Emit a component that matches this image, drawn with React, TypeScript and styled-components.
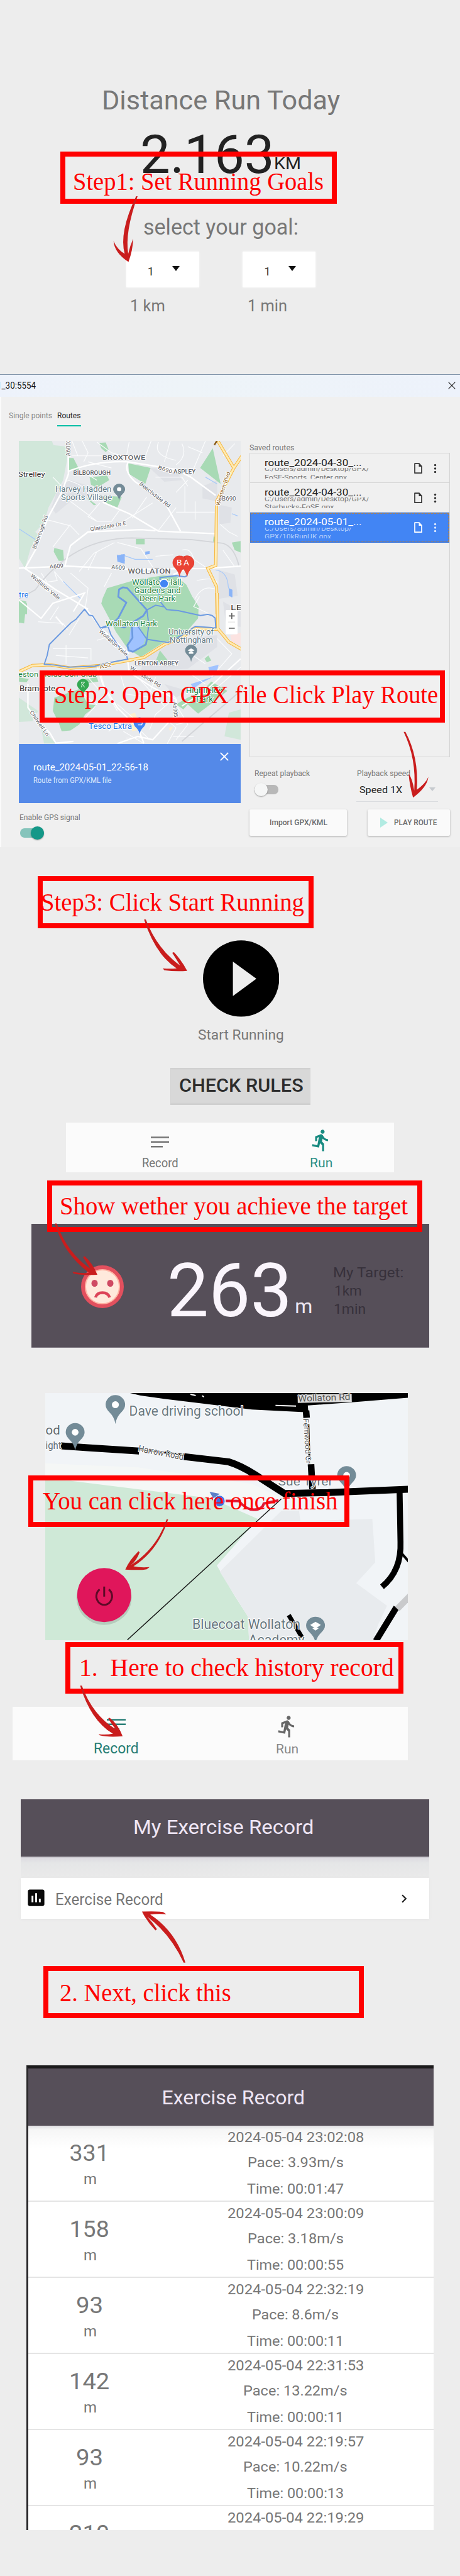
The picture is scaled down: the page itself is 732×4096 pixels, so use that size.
import React, { useLayoutEffect, useRef, useState } from "react";
import styled, { createGlobalStyle, css } from "styled-components";
import { MdDirectionsRun, MdInsertChart, MdChevronRight } from "react-icons/md";

const Global = createGlobalStyle`
  * { box-sizing: border-box; }
  html, body { margin: 0; padding: 0; background: #ededed; }
  body { font-family: Roboto, "Liberation Sans", sans-serif; }
`;

const Page = styled.main`
  position: relative;
  width: 732px;
  height: 4096px;
  overflow: hidden;
  background: #ededed;
`;

/* ---------- text ---------- */

const TextBox = styled.div<{ $w: number; $size: number; $top?: number; $left?: number; $color?: string; $weight?: number; $serif?: boolean; $self?: string }>`
  flex: none;
  width: ${(p) => p.$w}px;
  height: ${(p) => p.$size}px;
  line-height: ${(p) => p.$size}px;
  font-size: ${(p) => p.$size}px;
  font-weight: ${(p) => p.$weight ?? 400};
  color: ${(p) => p.$color ?? "#777"};
  margin: ${(p) => p.$top ?? 0}px 0 0 ${(p) => p.$left ?? 0}px;
  align-self: ${(p) => p.$self ?? "flex-start"};
  white-space: pre;
  ${(p) => p.$serif && css`font-family: "Liberation Serif", "Times New Roman", serif;`}
`;

const Stretch = styled.span`
  display: inline-block;
  transform-origin: 0 50%;
`;

type TextProps = { w: number; size: number; top?: number; left?: number; color?: string; weight?: number; serif?: boolean; self?: string; children: string };

/* A single line stretched horizontally to an exact width. */
function Text({ w, size, top, left, color, weight, serif, self, children }: TextProps) {
  const ref = useRef<HTMLSpanElement>(null);
  const [k, setK] = useState(1);
  useLayoutEffect(() => {
    if (ref.current) setK(w / ref.current.offsetWidth);
  }, [w, children]);
  return (
    <TextBox $w={w} $size={size} $top={top} $left={left} $color={color} $weight={weight} $serif={serif} $self={self}>
      <Stretch ref={ref} style={{ transform: `scaleX(${k})` }}>{children}</Stretch>
    </TextBox>
  );
}

/* ---------- step 1: goals ---------- */

const Goals = styled.section`
  height: 595.2px;
  padding-top: 138.8px;
  display: flex;
  flex-direction: column;
`;
const Row = styled.div<{ $top?: number; $left?: number; $gap?: number }>`
  display: flex;
  align-items: flex-start;
  margin: ${(p) => p.$top ?? 0}px 0 0 ${(p) => p.$left ?? 0}px;
  gap: ${(p) => p.$gap ?? 0}px;
`;
const Select = styled.div`
  display: flex;
  width: 116px;
  height: 57.6px;
  padding: 23px 0 0 34px;
  gap: 29px;
  background: #fff;
  box-shadow: 0 0 3px #f6f6f6;
`;
const Caret = styled.i<{ $w?: number; $h?: number; $color?: string }>`
  width: 0;
  height: 0;
  border-left: ${(p) => p.$w ?? 6.6}px solid transparent;
  border-right: ${(p) => p.$w ?? 6.6}px solid transparent;
  border-top: ${(p) => p.$h ?? 8}px solid ${(p) => p.$color ?? "#111"};
`;

/* ---------- step 2: emulator window ---------- */

const Window = styled.section`
  height: 752px;
  background: #f0f0f0;
  border-left: 2px solid #fbfbfb;
  display: flex;
  flex-direction: column;
`;
const TitleBar = styled.header`
  display: flex;
  justify-content: space-between;
  height: 35.5px;
  margin-left: -2px;
  padding: 11px 7px 0 0;
  border-top: 1.4px solid #8295aa;
  background: linear-gradient(90deg, #edf2fb, #eef4f8 40%, #edf2fb);
  overflow: hidden;
`;
const Tabs = styled.nav`
  display: flex;
  gap: 8px;
  height: 70.7px;
  padding: 24.6px 0 0 12px;
`;
const ActiveTab = styled.div`
  width: 37.8px;
  height: 22.5px;
  border-bottom: 2px solid #00bfa5;
`;
const Columns = styled.div`
  display: flex;
  gap: 14.5px;
  padding-left: 27.9px;
`;
const LeftCol = styled.div`
  width: 352.9px;
  display: flex;
  flex-direction: column;
`;
const RightCol = styled.div`
  width: 319px;
  display: flex;
  flex-direction: column;
`;
const RouteCard = styled.div`
  display: flex;
  height: 94.1px;
  padding-left: 22.9px;
  background: #5489e8;
`;
const RouteInfo = styled.div`
  width: 297px;
`;
const CloseSlot = styled.div`
  margin-top: 12.4px;
`;
const List = styled.div`
  margin-top: 2.5px;
  height: 484px;
  border: 1px solid #d4d4d4;
  border-top-width: 1.6px;
  border-bottom-width: 1.6px;
`;
const Item = styled.div<{ $on?: boolean }>`
  display: flex;
  height: 47.2px;
  padding-left: 22.3px;
  background: ${(p) => (p.$on ? "#4285f4" : "transparent")};
  border-bottom: 1px solid ${(p) => (p.$on ? "#3d79dd" : "#d4d4d4")};
  ${(p) => p.$on && css`box-shadow: inset 0 0 0 1.5px #3d79dd; outline: 1px dashed #a98258; outline-offset: -2.5px;`}
`;
const ItemText = styled.div`
  width: 238px;
`;
const PathClip = styled.div`
  height: 17px;
  margin-top: 0.8px;
  overflow: hidden;
  display: flex;
  flex-direction: column;
  & > :first-child { margin-top: -3.8px; }
`;
const IconPair = styled.svg`
  margin-top: 13.5px;
`;
const Controls = styled.div`
  display: flex;
  justify-content: space-between;
  height: 83px;
  padding: 19.8px 19px 0 7.5px;
`;
const ToggleTrack = styled.div<{ $on?: boolean }>`
  display: flex;
  align-items: center;
  justify-content: ${(p) => (p.$on ? "flex-end" : "flex-start")};
  width: 38px;
  height: 15px;
  border-radius: 7px;
  background: ${(p) => (p.$on ? "#85c4bb" : "#b8b8b8")};
`;
const Knob = styled.span<{ $on?: boolean }>`
  width: 21px;
  height: 21px;
  flex: none;
  border-radius: 50%;
  background: ${(p) => (p.$on ? "#149888" : "#f5f6f6")};
  box-shadow: 0 1px 2px rgba(0, 0, 0, 0.35);
`;
const Speed = styled.div`
  width: 129.8px;
`;
const SpeedValue = styled.div`
  display: flex;
  justify-content: space-between;
  height: 29px;
  margin-top: 10px;
  padding: 0 4px 0 5px;
  border-bottom: 1.4px solid #dadcdf;
`;
const Buttons = styled.div`
  display: flex;
  justify-content: space-between;
`;
const Button = styled.div<{ $w: number }>`
  display: flex;
  align-items: center;
  justify-content: center;
  gap: 10px;
  width: ${(p) => p.$w}px;
  height: 42px;
  background: #fafafa;
  border-radius: 2px;
  box-shadow: 0 1px 3px rgba(0, 0, 0, 0.3);
`;
const PlayMark = styled.i`
  border-left: 12.6px solid #b2ebe2;
  border-top: 8px solid transparent;
  border-bottom: 8px solid transparent;
`;

/* ---------- phone screens ---------- */

const Start = styled.section`
  display: flex;
  flex-direction: column;
  height: 437.6px;
  padding-top: 147.9px;
`;
const PlayCircle = styled.svg`
  flex: none;
  margin-left: 322.6px;
`;
const RulesButton = styled.div`
  width: 223.6px;
  height: 59px;
  margin: 41.5px 0 0 270.8px;
  padding: 14.5px 0 0 14px;
  background: #d8d8d8;
  box-shadow: inset 0 -3px 2px #cfcfcf, inset 0 2px 2px #cfcfcf;
`;
const NavBar = styled.nav<{ $w: number; $h: number; $left: number; $top?: number }>`
  display: flex;
  width: ${(p) => p.$w}px;
  height: ${(p) => p.$h}px;
  margin: ${(p) => p.$top ?? 0}px 0 0 ${(p) => p.$left}px;
  background: #fbfbfb;
`;
const NavItem = styled.div<{ $left: number; $color: string }>`
  display: flex;
  flex-direction: column;
  align-items: center;
  width: 72px;
  margin-left: ${(p) => p.$left}px;
  color: ${(p) => p.$color};
`;
const IconSlot = styled.div<{ $top: number; $h: number }>`
  height: ${(p) => p.$h}px;
  margin-top: ${(p) => p.$top}px;
`;
const Distance = styled.section`
  display: flex;
  width: 633px;
  height: 197.7px;
  margin: 82.1px 0 0 50px;
  background: #564f59;
  border-bottom: 1px solid #77717a;
`;
const FaceIcon = styled.svg`
  flex: none;
  margin: 66.6px 0 0 79.3px;
`;
const Target = styled.div`
  padding: 67px 0 0 32.5px;
`;
const MapFrame = styled.section`
  width: 577px;
  height: 392.5px;
  margin: 71.8px 0 0 72.4px;
`;
const MapSvg = styled.svg`
  display: block;
  font-family: Roboto, sans-serif;
  path { vector-effect: non-scaling-stroke; }
`;
const ScreenHeader = styled.header<{ $h: number }>`
  display: flex;
  justify-content: center;
  height: ${(p) => p.$h}px;
  background: #564f59;
`;
const RecordMenu = styled.section`
  width: 650px;
  margin: 62.4px 0 0 33px;
`;
const Shade = styled.div`
  height: 33.5px;
  background: linear-gradient(#a5a2a9, #dcdae0 6%, #e5e6e7 30%, #eaeaea);
`;
const MenuRow = styled.div`
  display: flex;
  height: 65.7px;
  padding: 14px 0 0 7.4px;
  background: #fff;
  box-shadow: 0 1px 4px #e4e4e4;
`;
const History = styled.section`
  width: 648px;
  height: 738.8px;
  margin: 232.8px 0 0 42px;
  border-top: 5px solid #1b1a1b;
  border-left: 3px solid #2a292b;
  background: #fff;
  overflow: hidden;
`;
const Entry = styled.div<{ $first?: boolean }>`
  display: grid;
  grid-template-columns: 194px 451px;
  height: 121px;
  border-bottom: 2px solid #e5e5e5;
  ${(p) => p.$first && css`background: linear-gradient(#dedde1, #f6f6f6 5%, #fff 30%);`}
`;
const Cell = styled.div`
  display: flex;
  flex-direction: column;
`;

/* ---------- annotations floating over the screens ---------- */

const Callout = styled.div<{ $x: number; $y: number; $w: number; $pad: number; $padTop: number }>`
  position: absolute;
  left: ${(p) => p.$x}px;
  top: ${(p) => p.$y}px;
  width: ${(p) => p.$w}px;
  height: 82.6px;
  border: 8px solid #f00;
  padding-top: ${(p) => p.$padTop}px;
  & > div { margin-left: ${(p) => p.$pad}px; }
`;
const ArrowLayer = styled.svg`
  position: absolute;
  left: 0;
  top: 0;
  pointer-events: none;
`;

function Note({ x, y, w, tx, base, tw, children }: { x: number; y: number; w: number; tx: number; base: number; tw: number; children: string }) {
  return (
    <Callout $x={x} $y={y} $w={w} $pad={tx - x - 8} $padTop={base - 32.8 - y - 8}>
      <Text w={tw} size={39} left={tx - x - 8} color="#f00" serif>{children}</Text>
    </Callout>
  );
}

const arrows = [
  { y: 101.66, k: 0.3112, d: "M469 676L464 676Q405 860 425 970Q400 950 387 905Q390 965 438 1012Q453 950 454 893Q443 930 437 970Q425 860 469 676Z" },
  { y: 948.8, k: 0.26797, d: "M1376 802L1382 802Q1428 950 1421 1145Q1450 1110 1460 1070Q1456 1130 1408 1192Q1396 1120 1393 1050Q1406 1080 1412 1150Q1420 960 1376 802Z" },
  { y: 1382.5, k: 0.31552, d: "M491 252L497 252Q535 400 614 484Q600 450 587 420L593 417Q620 460 638 511Q600 516 560 508L555 498Q580 502 602 498Q530 430 491 252Z" },
  { y: 1857, k: 0.22591, d: "M187 392L193 392Q230 600 308 710L283 628L289 622Q315 670 332 752Q280 758 250 742L247 732Q280 745 303 738Q215 600 187 392Z" },
  { y: 2189, k: 0.32849, d: "M568 690L573 690Q540 840 455 918Q480 926 510 922L500 932Q480 938 427 934Q440 890 472 845L476 850Q466 890 446 912Q535 830 568 690Z" },
  { y: 2683.8, k: 0.32849, d: "M273 -11L279 -11Q315 130 394 200Q375 165 369 147L374 145Q402 175 418 234Q370 240 340 230L336 224Q360 228 385 222Q310 160 273 -11Z" },
  { y: 2683.8, k: 0.32849, d: "M626 1330L632 1330Q600 1180 512 1097Q540 1092 567 1096L556 1085Q530 1080 484 1083Q500 1130 530 1174L535 1168Q520 1135 502 1108Q580 1190 626 1330Z" },
];

/* ---------- drawings ---------- */

const X = 0.46684;

type LabProps = { x: number; y: number; w: number; s: number; c?: string; rot?: number; halo?: string; weight?: number; children: string };
const Lab = ({ x, y, w, s, c = "#5f6368", rot = 0, halo = "#fff", weight = 400, children }: LabProps) => (
  <text
    transform={`translate(${x} ${y}) rotate(${rot})`}
    fontSize={s}
    fontWeight={weight}
    fill={c}
    stroke={halo}
    strokeWidth={halo === "none" ? 0 : 2}
    paintOrder="stroke"
    strokeLinejoin="round"
    textLength={w}
    lengthAdjust="spacingAndGlyphs"
  >
    {children}
  </text>
);

const Pin = ({ x, y, w, h, c = "#738b97", hole = "#fff" }: { x: number; y: number; w: number; h: number; c?: string; hole?: string }) => (
  <g transform={`translate(${x} ${y}) scale(${w / 20} ${h / 30})`}>
    <path d="M0 30Q-1 23 -6 18Q-10 14 -10 10A10 10 0 0 1 10 10Q10 14 6 18Q1 23 0 30Z" fill={c} />
    {hole !== "none" && <circle cy="10" r="3.6" fill={hole} />}
  </g>
);

const westernBlvd = "M740 455L797 640L738 860L735 1280L708 1300L738 1420L740 1600M825 560L797 640";
const a52 = "M60 450L110 410L170 405L240 425L340 410L435 380L490 362L560 285L620 245L660 190L740 195M740 -20L742 190L780 270L825 315";

const RouteMap = () => (
  <MapSvg width="352.9" height="481.3" viewBox="29.9 701.4 352.9 481.3" preserveAspectRatio="none">
    <rect x="29" y="701" width="355" height="483" fill="#e8eaed" />
    <g transform={`translate(0 589.6) scale(${X} .24204)`} fill="none">
      <path fill="#d1e7da" d="M60 455H175L182 490L230 500L228 590L215 720L165 900L150 1000L120 1060L64 1030Z" />
      <path fill="#d1e7da" d="M60 1020L120 1060L135 1090L105 1160L85 1300L60 1220Z" />
      <path fill="#dfe1e6" d="M200 760L240 720L290 750L300 830L240 860L190 940L175 900ZM690 760L740 720V860L690 840ZM745 880L790 900L785 1000L748 1010ZM745 1310L800 1340L810 1480L745 1500ZM510 640L600 650L620 720L560 730Z" />
      <path fill="#a8dab5" d="M338 475L360 472L370 520L360 535L345 510ZM235 575L250 575L270 650L235 660ZM437 610L513 640L495 745L440 680ZM725 510L752 745L682 640ZM305 700L365 690L372 720L330 770L310 750ZM340 820L415 830L400 900L355 865ZM463 1105H493V1142H463ZM185 1165L215 1180L218 1250H200L183 1190ZM728 1090L738 1095V1130L726 1125ZM790 1130L820 1120V1195L800 1180ZM290 830L328 880L320 885ZM64 1510L92 1530V1600H64Z" />
      <path stroke="#fbfcfd" strokeWidth="1.2" d="M245 462L265 560M280 462L300 540L285 600M330 470L380 540L415 560M440 470L430 570M515 462L490 590M540 470Q520 560 600 590M580 462L560 600M620 480Q640 560 600 620M640 500L690 540M700 462L650 690M270 650L330 720M245 560L350 560M300 600L380 640M530 700H620L640 760M640 720L600 800M630 760V930M600 930H735M665 860V980M760 560L800 480M750 1010L780 1060L810 1090M500 830L450 970M520 870L380 1040M340 870L300 960L330 990H380L410 910M240 860L330 990M160 980L240 1020L270 1080M240 1010L180 1160M540 1050L600 900M330 1190L300 1310M390 1130L320 1200L270 1320M400 1130L480 1170L520 1290M140 1330L160 1390L195 1380L185 1320L220 1400M240 1330L300 1430L290 1568M120 1350L190 1480M380 1330L355 1420M620 1180Q650 1160 660 1240L700 1290M530 1220L590 1210M670 1380Q740 1350 740 1400M665 1500Q690 1400 740 1440M180 700L210 760M230 720Q300 760 300 820M760 1180L800 1290" />
      <path stroke="#d3d5d9" strokeWidth="1.8" d="M64 1500L120 1440Q250 1100 450 1100L650 1110L760 1135Q800 1160 815 1290" />
      <g stroke="#fff" strokeWidth="2.4">
        <path d="M232 462L233 680L210 800L165 960L120 1180L85 1300L190 1440L300 1568" />
        <path d="M235 660Q330 590 437 600L600 650L650 700L735 820M437 600Q420 660 460 730L560 860L615 1055M350 865L440 940L540 1055L735 1072M530 1052L480 1045L300 1060L240 1150L220 1290M64 1298L230 1285L440 1305L700 1300L820 1285M640 1300L590 1340" />
      </g>
      <path stroke="#f6b73c" strokeWidth="5" d={westernBlvd} />
      <path stroke="#ffeab2" strokeWidth="3" d={westernBlvd} />
      <path stroke="#a5c8fa" strokeWidth="1.2" d="M400 1210L425 1250L415 1210L460 1240L520 1240M215 1385L275 1500M735 1310Q775 1320 778 1420L790 1490M700 700L740 745M65 1040L120 1110M790 940L810 955" />
      <path fill="#8ab4f8" d="M398 1215L425 1205V1270L400 1255ZM495 1190L510 1185V1205L495 1210ZM780 1430L792 1440V1490L780 1480Z" />
    </g>
    <g transform={`translate(0 948.8) scale(${X} .26797)`} fill="none">
      <path fill="#dfe1e6" d="M490 370L600 260L740 230V300L640 430L480 440ZM760 30L820 90V180L770 170ZM560 520L640 560L600 600Z" />
      <path fill="#d1e7da" d="M64 600L130 680L110 740L64 745ZM780 690L820 670V850L765 830ZM140 780L190 873H150Z" />
      <path fill="#a8dab5" d="M365 -49L460 -98L555 -125L600 -121L635 -70L655 0L677 60L675 130L620 240L560 270L480 360L435 310L395 210L375 140L345 42L350 10ZM64 20L90 30L82 160L64 155ZM185 600L270 550L300 640L330 645L290 700L270 760L240 795L210 800L200 750L180 680ZM290 490L330 480L335 505L295 515ZM720 505L775 560L740 610L675 695L640 640L625 670L600 640L640 600L690 560ZM545 320L570 375L575 410L530 385ZM710 350L720 380L705 390L697 370ZM64 480L98 490L90 510L64 505Z" />
      <path fill="#a0c3ff" d="M445 190L470 160L495 250L490 280L455 330L437 315ZM650 520L720 480L735 470L690 510L660 545ZM710 420L745 405L740 440L715 455Z" />
      <path fill="#fdf0cf" d="M440 700L460 690L480 790L450 800ZM575 780L590 770L580 800Z" />
      <path fill="#fbe3e1" d="M785 230L820 215V290L790 270Z" />
      <path stroke="#fbfcfd" strokeWidth="1.2" d="M130 150L215 160L230 200M200 60L170 140M270 130L235 230M180 310H310V380M225 290V400M190 350L300 365M330 260L370 240M340 440L360 560L400 680M300 480L340 560M270 560L330 640M400 640L480 760M410 460L430 580L520 600M530 480L500 620M480 500L560 650M560 560L600 600M590 610L530 700L510 790M600 640L640 760L600 850M640 450L700 520M560 720L600 780L570 873M600 760L700 720M660 830H590M330 640L290 720M420 800L490 873M370 800L420 740M430 840H480M480 800L510 850M740 250L790 340L720 480M820 420L700 600M680 0L660 60L710 100M640 330L700 400" />
      <path stroke="#fff" strokeWidth="2.2" d="M64 20L140 130L180 40L288 -20L250 90M288 60L345 190L440 340M190 120L215 170M435 380L440 450L520 540L600 610V720M330 410L350 520L400 660L470 780L490 870M95 520V660L130 740L170 810L190 870L250 860M400 873L470 830L520 850L600 700M820 370L700 560L620 650" />
      <path stroke="#d3d5d9" strokeWidth="2" d="M820 560L740 680L620 860" />
      <path stroke="#f6b73c" strokeWidth="5" d={a52} />
      <path stroke="#ffeab2" strokeWidth="3" d={a52} />
      <path stroke="#6b9ae1" strokeWidth="2" d="M548 -40L545 -112L600 -124L630 -116L638 -125" />
    </g>
    <g transform="translate(27.1 935.25) scale(.23341)" fill="none" stroke="#6b9ae1" strokeWidth="1.9" strokeLinejoin="round">
      <path d="M460 145L490 185L515 190L570 275L620 262L640 320L700 410L735 435L755 485L600 515L530 533L350 540L250 525L185 520L205 460L220 385L270 335L370 235L400 215Z" />
      <path d="M815 250L885 350M885 150L898 250L885 350L1030 372L1120 325L1215 262L1355 272L1350 205L1330 188L1300 180L1250 188L1100 155L1020 148L1005 130L945 118L885 150M1005 130L965 80L970 30L1000 0" />
      <path strokeWidth="2.8" d="M570 275L650 245L690 205L745 100L690 60L695 10L720 -4L750 0L885 150L860 190L780 240L730 270L690 255L650 250M782 240L787 340L752 390L760 425L790 435L878 385L885 350" />
    </g>
    <Lab x={112} y={726} w={28} s={9} rot={-90}>A6002</Lab>
    <Lab x={162.6} y={731} w={68.5} s={9.5} weight={500}>BROXTOWE</Lab>
    <Lab x={29} y={758.5} w={42.5} s={11.5} c="#333">Strelley</Lab>
    <Lab x={116.5} y={755} w={59.5} s={8.6} weight={500}>BILBOROUGH</Lab>
    <Lab x={251} y={746} w={23} s={8} rot={18}>B690</Lab>
    <Lab x={276} y={753.5} w={35} s={8.6} weight={500}>ASPLEY</Lab>
    <Lab x={87.8} y={782} w={89.5} s={12.5} c="#5d7986">Harvey Hadden</Lab>
    <Lab x={97} y={795.5} w={81} s={12.5} c="#5d7986">Sports Village</Lab>
    <Lab x={221} y={771} w={60} s={8.5} rot={38}>Beechdale Rd</Lab>
    <Lab x={349} y={805} w={56} s={8.5} rot={-72} c="#8a5b16">Western Blvd</Lab>
    <Lab x={353} y={796} w={22.5} s={8.5}>B690</Lab>
    <Lab x={144} y={845} w={58} s={8.5} rot={-10}>Glaisdale Dr E</Lab>
    <Lab x={57} y={874} w={56} s={8.5} rot={-70}>Bilborough Rd</Lab>
    <Lab x={79} y={904.5} w={22} s={9} rot={-4}>A609</Lab>
    <Lab x={177} y={905} w={22} s={9} rot={4}>A609</Lab>
    <Lab x={203.5} y={912} w={68} s={10.5} weight={500}>WOLLATON</Lab>
    <Lab x={48} y={917} w={58} s={8.5} rot={40}>Wollaton Vale</Lab>
    <Lab x={210} y={930} w={81} s={12} c="#1e8444">Wollaton Hall,</Lab>
    <Lab x={213.5} y={943.5} w={74} s={12} c="#1e8444">Gardens and</Lab>
    <Lab x={222} y={956.5} w={57} s={12} c="#1e8444">Deer Park</Lab>
    <Lab x={30} y={950} w={15} s={12} c="#1a73e8">tre</Lab>
    <Lab x={367} y={970} w={18} s={11.5} c="#333">LE</Lab>
    <Lab x={168} y={996} w={82} s={12} c="#1e8444">Wollaton Park</Lab>
    <Lab x={268} y={1009} w={72} s={12} c="#5d7986">University of</Lab>
    <Lab x={270} y={1022} w={69} s={12} c="#5d7986">Nottingham</Lab>
    <Lab x={157} y={1005} w={58} s={8.5} rot={42}>Wollaton Vale</Lab>
    <Lab x={159} y={1064} w={19} s={9} rot={-12} c="#8a5b16">A52</Lab>
    <Lab x={214} y={1058.5} w={70} s={8.8} weight={500}>LENTON ABBEY</Lab>
    <Lab x={206} y={1064} w={56} s={8.5} rot={32}>Woodside Rd</Lab>
    <Lab x={29} y={1076} w={125} s={11.5} c="#1e8444">eston Fields Golf Club</Lab>
    <Lab x={31} y={1099} w={57} s={12} c="#333">Bramcote</Lab>
    <Lab x={296} y={1102.5} w={58} s={12} c="#1e8444">Highfields</Lab>
    <Lab x={312} y={1116} w={27} s={12} c="#1e8444">Park</Lab>
    <Lab x={275} y={1117} w={24} s={8.5} rot={85}>A6005</Lab>
    <Lab x={47} y={1133} w={47} s={8.5} rot={55}>Chilwell Ln</Lab>
    <Lab x={141} y={1159} w={69} s={12} c="#1a73e8">Tesco Extra</Lab>
    <path d="M341 708L352 690" stroke="#8a5b16" strokeWidth="2.5" />
    <Pin x={189.5} y={769.5} w={19} h={27} />
    <Pin x={304} y={1025.5} w={19} h={27.5} hole="none" />
    <path d="M298.5 1034.5l5.500-3 5.500 3-5.500 3zM300.500 1037.500h7v2.500h-7z" fill="#fff" />
    <Pin x={132} y={1080} w={19} h={27} c="#34a853" hole="none" />
    <path d="M129.500 1093l1-4-1-4h5l-3 4 3 4" stroke="#fff" fill="none" />
    <Pin x={222} y={1141} w={19} h={27} c="#4285f4" hole="none" />
    <path d="M217.500 1149h9l-1 4h-6" stroke="#fff" fill="none" strokeWidth="1.2" />
    <Pin x={297.5} y={884} w={23} h={34} c="#c5362c" hole="none" />
    <Pin x={297.8} y={884} w={22} h={34} c="#ea4335" hole="none" />
    <path d="M288 884.500a12 12 0 0 1 9.500 12" stroke="#b52d24" fill="none" />
    <Pin x={285.5} y={884} w={22} h={34} c="#ea4335" hole="none" />
    <Lab x={281} y={899.5} w={8.5} s={12} c="#fff" halo="none">B</Lab>
    <Lab x={292} y={899.5} w={9} s={12} c="#fff" halo="none">A</Lab>
    <circle cx="261" cy="928.5" r="7" fill="#4285f4" stroke="#fff" strokeWidth="1.5" />
    <rect x="359" y="970.5" width="19" height="38.500" rx="1.5" fill="#fff" />
    <path d="M363 989.500h11" stroke="#ddd" />
    <path d="M364 979.800h9.500M368.700 975.200v9.400M364 999.300h9.500" stroke="#666" strokeWidth="1.8" />
  </MapSvg>
);

const RunMap = () => (
  <MapSvg width="577" height="392.5" viewBox="72.4 2215.3 577 392.5">
    <rect x="72" y="2215" width="578" height="394" fill="#f1f4f7" />
    <g transform={`translate(0 2189) scale(${X} .32849)`} fill="none">
      <path fill="#f5f7f6" d="M155 420L470 440L860 520L960 590L720 590L155 500Z" />
      <path fill="#cfe9d7" d="M150 503L240 505L720 590L880 690L740 915L800 1060L845 1160L850 1280H150Z" />
      <path fill="#e8ebee" d="M960 650L1020 650L1025 700L1270 690L1280 900L1215 1000L1320 1110L1290 1200L1270 1280H850L845 1160L750 945Z" />
      <path fill="#000" d="M438 78H1400V102L1200 125L1050 140L1052 172L1030 172L860 160L560 108L480 92Z" />
      <path stroke="#fff" strokeWidth="2" d="M650 86L668 92M690 93L696 99M940 140L1010 143" />
      <g stroke="#000">
        <path d="M1044 165L1046 200M1061 425L1066 545" strokeWidth="10.5" />
        <path d="M208 336L300 345L475 361M628 388L780 413Q820 430 870 475L970 566L1120 562L1400 545" strokeWidth="11" />
        <path d="M475 352L628 380M1052 230L1056 425" strokeWidth="3" />
        <path d="M1363 560L1366 800Q1370 940 1303 1018" strokeWidth="9.5" />
        <path d="M1366 850L1400 905" strokeWidth="4" />
        <path d="M1352 1118L1282 1280" strokeWidth="10" />
        <path d="M985 1155L1030 1262" strokeWidth="7" />
      </g>
      <path stroke="#c9cacc" strokeWidth="10" d="M1400 1060L1355 1125" />
      <path stroke="#111" strokeWidth="1.4" d="M960 592L435 1275" />
      <path stroke="#e01a35" strokeWidth="4" d="M770 602L815 603Q840 645 865 645Q895 645 900 615L950 600" />
      <path fill="#5c80c8" d="M715 558L750 568L728 590Z" />
    </g>
    <circle cx="349.5" cy="2387" r="8.5" fill="#3a74e8" />
    <Lab x={206} y={2251.5} w={182} s={21.5} c="#67777f">Dave driving school</Lab>
    <Lab x={73} y={2281.5} w={23} s={20} c="#606a70">od</Lab>
    <Lab x={73} y={2304} w={25} s={16} c="#606a70">ight</Lab>
    <rect x="474" y="2218" width="86" height="13" fill="#dcdcdc" transform="rotate(-1 474 2218)" />
    <Lab x={220} y={2308} w={73} s={14.5} rot={11} c="#555">Harrow Road</Lab>
    <Lab x={475} y={2229} w={83} s={14.5} rot={-2} c="#555" halo="#dcdcdc">Wollaton Rd</Lab>
    <Lab x={483} y={2256} w={72} s={12} rot={86.5} c="#555">Fernwood Cr</Lab>
    <Lab x={443} y={2362} w={87} s={19} c="#67777f">Sue Tyrer</Lab>
    <Lab x={306.5} y={2590.5} w={172} s={21.5} c="#67777f">Bluecoat Wollaton</Lab>
    <Lab x={396} y={2615} w={89} s={21.5} c="#67777f">Academy</Lab>
    <Pin x={184} y={2218.5} w={31} h={46} />
    <Pin x={120} y={2263} w={30} h={44} />
    <Pin x={552} y={2331.5} w={30} h={44} />
    <Pin x={502.5} y={2571} w={30} h={42} hole="none" />
    <path d="M494 2584l8.500-5 8.500 5-8.500 6zM497 2589h11l-5.500 4z" fill="#fff" />
    <ellipse cx="166" cy="2541" rx="44" ry="43" fill="#000" opacity=".12" />
    <circle cx="166.2" cy="2536.5" r="43" fill="#e0165b" />
    <path d="M159 2527.500a12.500 13.500 0 1 0 14.500 0M166.200 2523v16" fill="none" stroke="#5d0a27" strokeWidth="3" />
  </MapSvg>
);

const Lines = ({ w, color }: { w: number; color: string }) => (
  <svg width={w} height="20" viewBox="0 0 29 20" preserveAspectRatio="none">
    <path d="M0 2.500H29M0 9.700H29M0 17.200H19" stroke={color} strokeWidth="2.6" />
  </svg>
);

const Cross = ({ size, color, sw }: { size: number; color: string; sw: number }) => (
  <svg width={size} height={size} viewBox="0 0 12 12">
    <path d="M.7 .7L11.300 11.300M11.300 .7L.7 11.300" stroke={color} strokeWidth={sw} />
  </svg>
);

const ItemIcons = ({ on }: { on?: boolean }) => (
  <IconPair width="40" height="20" viewBox="0 0 40 20">
    <path d="M1 2.200H8.200L12 6.500V17.200H1Z" fill="none" stroke={on ? "#fff" : "#333"} strokeWidth="1.7" strokeLinejoin="round" />
    <path d="M7.500 2V7H12z" fill={on ? "#fff" : "#333"} />
    {[4.5, 10, 15.5].map((y) => <circle key={y} cx="33.5" cy={y} r="1.7" fill={on ? "#dbe7fd" : "#333"} />)}
  </IconPair>
);

const Face = () => (
  <FaceIcon width="68" height="68" viewBox="0 0 68 68">
    <circle cx="34" cy="34" r="30.5" fill="#ffe9dc" stroke="#e2505e" strokeWidth="7" />
    <circle cx="34" cy="34" r="27" fill="none" stroke="#ffb6a6" strokeWidth="2" />
    <ellipse cx="21.5" cy="28.5" rx="5" ry="5.500" fill="#cf4a63" />
    <ellipse cx="46.5" cy="28.5" rx="5" ry="5.500" fill="#cf4a63" />
    <path d="M23 51Q25 43.500 34 43.500Q43 43.500 45.500 51" fill="none" stroke="#dc4358" strokeWidth="4.5" />
  </FaceIcon>
);

/* ---------- data ---------- */

const routes = [
  { name: "route_2024-04-30_...", a: "C:/Users/admin/Desktop/GPX/", aw: 166.5, b: "FoSE-Sports_Center.gpx", bw: 130.5 },
  { name: "route_2024-04-30_...", a: "C:/Users/admin/Desktop/GPX/", aw: 166.5, b: "Starbucks-FoSE.gpx", bw: 110 },
  { name: "route_2024-05-01_...", a: "C:/Users/admin/Desktop/", aw: 139, b: "GPX/10kRunUK.gpx", bw: 106, on: true },
];

const runs = [
  { d: "331", dw: 63, at: "2024-05-04 23:02:08", pace: "3.93", pw: 152.5, t: "00:01:47" },
  { d: "158", dw: 63, at: "2024-05-04 23:00:09", pace: "3.18", pw: 152.5, t: "00:00:55" },
  { d: "93", dw: 43, at: "2024-05-04 22:32:19", pace: "8.6", pw: 138, t: "00:00:11" },
  { d: "142", dw: 64, at: "2024-05-04 22:31:53", pace: "13.22", pw: 166, t: "00:00:11" },
  { d: "93", dw: 43, at: "2024-05-04 22:19:57", pace: "10.22", pw: 166, t: "00:00:13" },
  { d: "210", dw: 64, at: "2024-05-04 22:19:29", pace: "", pw: 150, t: "" },
];

export default function App() {
  return (
    <Page>
      <Global />

      <Goals>
        <Text w={379} size={42.5} left={162}>Distance Run Today</Text>
        <Row $top={23} $left={222.5}>
          <Text w={213} size={85.4} color="#222">2.163</Text>
          <Text w={43} size={26} top={42.4} color="#222">KM</Text>
        </Row>
        <Text w={247} size={35} top={54.2} left={228}>select your goal:</Text>
        <Row $top={20.9} $left={200.7} $gap={69.6}>
          {[0, 1].map((i) => (
            <Select key={i}>
              <Text w={10} size={18.5} color="#333">1</Text>
              <Caret />
            </Select>
          ))}
        </Row>
        <Row $top={16.6} $left={207} $gap={131}>
          <Text w={56} size={25}>1 km</Text>
          <Text w={63} size={25}>1 min</Text>
        </Row>
      </Goals>

      <Window>
        <TitleBar>
          <Text w={62} size={14.5} left={-5} color="#111">1_30:5554</Text>
          <Cross size={12} color="#222" sw={1.2} />
        </TitleBar>
        <Tabs>
          <Text w={69} size={12} color="#888">Single points</Text>
          <ActiveTab>
            <Text w={37} size={12} color="#222">Routes</Text>
          </ActiveTab>
        </Tabs>
        <Columns>
          <LeftCol>
            <RouteMap />
            <RouteCard>
              <RouteInfo>
                <Text w={183} size={15.5} top={30.2} color="#fff">route_2024-05-01_22-56-18</Text>
                <Text w={124.5} size={12} top={7} color="#dfe9fc">Route from GPX/KML file</Text>
              </RouteInfo>
              <CloseSlot><Cross size={14} color="#fff" sw={1.6} /></CloseSlot>
            </RouteCard>
            <Text w={96.5} size={12.2} top={16.8} left={1.2}>Enable GPS signal</Text>
            <Row $top={11} $left={1.8}>
              <ToggleTrack $on><Knob $on /></ToggleTrack>
            </Row>
          </LeftCol>
          <RightCol>
            <Text w={71} size={12} top={4.2}>Saved routes</Text>
            <List>
              {routes.map((r, i) => (
                <Item key={i} $on={r.on}>
                  <ItemText>
                    <Text w={154} size={14.3} top={8} color={r.on ? "#fff" : "#222"}>{r.name}</Text>
                    <PathClip>
                      <Text w={r.aw} size={11.2} color={r.on ? "#b9d1fb" : "#777"}>{r.a}</Text>
                      <Text w={r.bw} size={11.2} top={2.4} color={r.on ? "#b9d1fb" : "#777"}>{r.b}</Text>
                    </PathClip>
                  </ItemText>
                  <ItemIcons on={r.on} />
                </Item>
              ))}
            </List>
            <Controls>
              <div>
                <Text w={88.5} size={12}>Repeat playback</Text>
                <Row $top={12.6}><ToggleTrack><Knob /></ToggleTrack></Row>
              </div>
              <Speed>
                <Text w={85.5} size={12} left={1}>Playback speed</Text>
                <SpeedValue>
                  <Text w={68} size={15} top={3} color="#222">Speed 1X</Text>
                  <Row $top={6.6}><Caret $w={5.8} $h={6.2} $color="#c6cace" /></Row>
                </SpeedValue>
              </Speed>
            </Controls>
            <Buttons>
              <Button $w={154.5}>
                <Text w={91.6} size={12} weight={500} self="center" color="#6b6b6b">Import GPX/KML</Text>
              </Button>
              <Button $w={131.6}>
                <PlayMark />
                <Text w={68.7} size={12} weight={500} self="center" color="#6b6b6b">PLAY ROUTE</Text>
              </Button>
            </Buttons>
          </RightCol>
        </Columns>
      </Window>

      <Start>
        <PlayCircle width="121.4" height="122" viewBox="322.6 1495.1 121.4 122.1">
          <circle cx="383.3" cy="1556.1" r="60.7" fill="#000" />
          <path d="M370.200 1529.200L407.600 1556.500L370.200 1583.800Z" fill="#eee" />
        </PlayCircle>
        <Text w={137} size={21.5} top={17.6} left={314.5}>Start Running</Text>
        <RulesButton>
          <Text w={197.5} size={29} weight={500} color="#2c2c2c">CHECK RULES</Text>
        </RulesButton>
      </Start>
      <NavBar $w={522.9} $h={78.9} $left={104.6}>
        <NavItem $left={114.3} $color="#777">
          <IconSlot $top={21} $h={33}><Lines w={29} color="#777" /></IconSlot>
          <Text w={58} size={20} self="center">Record</Text>
        </NavItem>
        <NavItem $left={184.5} $color="#178a80">
          <IconSlot $top={9} $h={45}><MdDirectionsRun size={38} /></IconSlot>
          <Text w={36} size={20} self="center" color="#2a8f86">Run</Text>
        </NavItem>
      </NavBar>

      <Distance>
        <Face />
        <Text w={199} size={118} top={48.5} left={68.5} color="#faf5fc">263</Text>
        <Text w={28} size={32} top={115.3} left={4.5} color="#eee6f0">m</Text>
        <Target>
          <Text w={112} size={22} color="#37313b">My Target:</Text>
          <Text w={44} size={22} top={7} left={2} color="#37313b">1km</Text>
          <Text w={51} size={22} top={7} left={1} color="#37313b">1min</Text>
        </Target>
      </Distance>

      <MapFrame>
        <RunMap />
      </MapFrame>

      <NavBar $w={629.8} $h={85.4} $left={19.6} $top={105.9}>
        <NavItem $left={129.5} $color="#178a80">
          <IconSlot $top={18.5} $h={37}><Lines w={30} color="#2b8078" /></IconSlot>
          <Text w={71.5} size={23} self="center" color="#257d74">Record</Text>
        </NavItem>
        <NavItem $left={200.3} $color="#666">
          <IconSlot $top={12.5} $h={45}><MdDirectionsRun size={38} /></IconSlot>
          <Text w={36} size={20.5} self="center" color="#888">Run</Text>
        </NavItem>
      </NavBar>

      <RecordMenu>
        <ScreenHeader $h={90.7}>
          <Text w={288} size={32} top={27.3} left={-4} color="#efe6f5">My Exercise Record</Text>
        </ScreenHeader>
        <Shade />
        <MenuRow>
          <MdInsertChart size={35} color="#0a0a0a" />
          <Text w={172} size={25} top={8.5} left={13}>Exercise Record</Text>
          <Row $left={370} $top={6}><MdChevronRight size={26} color="#222" /></Row>
        </MenuRow>
      </RecordMenu>

      <History>
        <ScreenHeader $h={90.9}>
          <Text w={228} size={32} top={29.7} left={8} color="#efe6f5">Exercise Record</Text>
        </ScreenHeader>
        {runs.map((r, i) => (
          <Entry key={i} $first={i === 0}>
            <Cell>
              <Text w={r.dw} size={37.5} top={25.5} left={97 - r.dw / 2}>{r.d}</Text>
              <Text w={21} size={24} top={10.5} left={88}>m</Text>
            </Cell>
            <Cell>
              <Text w={217} size={22} top={8.4} left={122.5}>{r.at}</Text>
              {r.pace && <Text w={r.pw} size={22} top={17.4} left={231 - r.pw / 2}>{`Pace: ${r.pace}m/s`}</Text>}
              {r.t && <Text w={154} size={22} top={19.8} left={154}>{`Time: ${r.t}`}</Text>}
            </Cell>
          </Entry>
        ))}
      </History>

      <Note x={96.2} y={241.4} w={439.7} tx={116} base={301.8} tw={399}>Step1: Set Running Goals</Note>
      <Note x={62.8} y={1066.2} w={645.4} tx={86} base={1117.5} tw={611.5}>Step2: Open GPX file Click Play Route</Note>
      <Note x={59.8} y={1393.2} w={439.7} tx={64.5} base={1447.8} tw={418.5}>Step3: Click Start Running</Note>
      <Note x={74.7} y={1876.7} w={597.5} tx={95} base={1930.9} tw={554}>Show wether you achieve the target</Note>
      <Note x={45.3} y={2345.7} w={511.2} tx={68} base={2399.6} tw={470}>You can click here once finish</Note>
      <Note x={104.1} y={2610.5} w={538.3} tx={126} base={2664.7} tw={501}>{"1.  Here to check history record"}</Note>
      <Note x={68.6} y={3126.3} w={510.7} tx={95.5} base={3182} tw={272.5}>2. Next, click this</Note>

      <ArrowLayer width="732" height="4096" viewBox="0 0 732 4096" aria-hidden="true">
        {arrows.map((a, i) => (
          <path key={i} d={a.d} transform={`translate(0 ${a.y}) scale(${X} ${a.k})`} fill="#c91d1d" />
        ))}
      </ArrowLayer>
    </Page>
  );
}
